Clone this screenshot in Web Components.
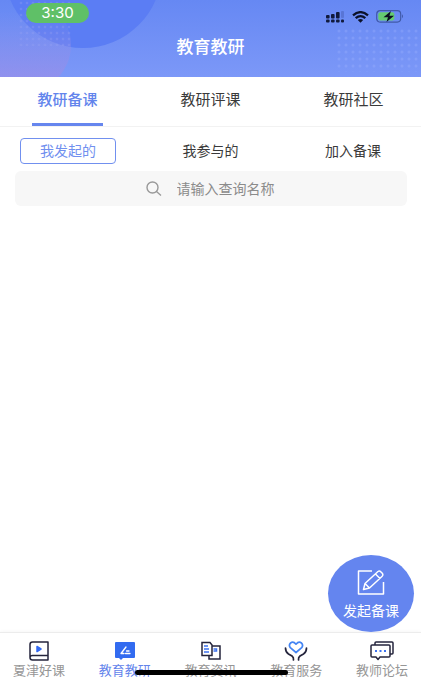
<!DOCTYPE html>
<html lang="zh-CN">
<head>
<meta charset="utf-8">
<meta name="viewport" content="width=device-width, initial-scale=1">
<title>教育教研</title>
<style>
  html, body { margin: 0; height: 100%; background: #fff; }
  body { font-family: "Liberation Sans", "Noto Sans CJK SC", sans-serif; color: #3a3a3a; }
</style>
</head>
<body>
<lesson-app></lesson-app>
<script>
const define = (name, html) => {
  const template = document.createElement('template');
  template.innerHTML = '<style>*{box-sizing:border-box}button{font:inherit;color:inherit;background:none;border:0;padding:0;margin:0;cursor:pointer;white-space:nowrap}svg{display:block}</style>' + html;
  customElements.define(name, class extends HTMLElement {
    constructor() {
      super();
      this.attachShadow({ mode: 'open' }).append(template.content.cloneNode(true));
    }
  });
};

define('status-bar', `
<style>
  :host { display: flex; justify-content: space-between; align-items: flex-start; padding: 3px 17px 0 26px; height: 30px; }
  time { background: #5fc067; color: #fff; border-radius: 10px; width: 63px; height: 20px; line-height: 20px; text-align: center; font-family: Inter, sans-serif; font-size: 15px; }
  .icons { display: flex; align-items: center; gap: 7px; padding-top: 7px; }
</style>
<time>3:30</time>
<div class="icons">
  <svg width="19" height="12" viewBox="0 0 19 12" aria-label="信号"><g fill="#101a3c"><rect x="0" y="4" width="3.600" height="3.500" rx="1"/><rect x="5" y="3" width="3.600" height="4.500" rx="1"/><rect x="10" y="1" width="3.600" height="6.500" rx="1"/><rect x="0" y="8.500" width="3.600" height="3" rx="1"/><rect x="5" y="8.500" width="3.600" height="3" rx="1"/><rect x="10" y="8.500" width="3.600" height="3" rx="1"/><rect x="15" y="8.500" width="3" height="3" rx="1"/></g><rect x="15" y="0" width="3" height="7" rx="1" fill="#4a65be" opacity=".55"/></svg>
  <svg width="17" height="12" viewBox="0 0 17 12" aria-label="无线网络" fill="none" stroke="#0b122b" stroke-width="2.300"><path d="M1 4.300Q8.500-2 16 4.300M3.700 7.200Q8.500 3 13.300 7.200"/><path d="M5.800 9Q8.500 6.800 11.200 9L8.500 11.700Z" fill="#0b122b" stroke="none"/></svg>
  <svg width="28" height="13" viewBox="0 0 28 13" aria-label="电池"><rect x=".7" y=".7" width="24" height="11.400" rx="3.500" fill="none" stroke="#405aa9" stroke-width="1.200"/><rect x="2.300" y="2.300" width="16" height="8.200" rx="2" fill="#65cb70"/><path d="M26 4.300Q28 6.300 26 8.300Z" fill="#405aa9"/><path d="M15 1L7.500 7.200H12L10.500 12 18 5.700H13.400Z" fill="#0b1020"/></svg>
</div>`);

define('page-header', `
<style>
  :host { display: block; position: relative; overflow: hidden; height: 77px; background: linear-gradient(#6688f3, #7c98f8); color: #fff; }
  .art { position: absolute; top: 0; }
  .left { left: 0; } .right { right: 0; }
  status-bar, h1 { position: relative; }
  h1 { margin: 0; padding-top: 5px; text-align: center; font-size: 17px; line-height: 26px; font-weight: 500; }
</style>
<svg class="art left" width="180" height="77" aria-hidden="true">
  <defs>
    <linearGradient id="pink" x1="0" y1="0" x2="0" y2="1"><stop offset=".15" stop-color="#8b8ee8" stop-opacity="0"/><stop offset=".9" stop-color="#988eea" stop-opacity=".8"/></linearGradient>
    <pattern id="dl" width="6" height="6" patternUnits="userSpaceOnUse"><circle cx="3" cy="3" r="1.300" fill="#9aa4f3" opacity=".3"/></pattern>
  </defs>
  <circle cx="83" cy="-31" r="79" fill="#5b7df4"/>
  <circle cx="23" cy="45" r="48" fill="url(#pink)"/>
  <rect x="18" y="0" width="54" height="46" fill="url(#dl)"/>
</svg>
<svg class="art right" width="86" height="77" aria-hidden="true">
  <defs><pattern id="dr" width="7" height="7" patternUnits="userSpaceOnUse"><circle cx="4" cy="3" r="1.500" fill="#a5b7ff" opacity=".28"/></pattern></defs>
  <rect x="0" y="28" width="86" height="44" fill="url(#dr)"/>
</svg>
<status-bar></status-bar>
<h1>教育教研</h1>`);

define('main-tabs', `
<style>
  :host { display: block; border-bottom: 1px solid #f2f2f2; }
  nav { display: flex; justify-content: space-between; padding: 0 32px; }
  button { width: 71px; height: 49px; padding-bottom: 4px; font-size: 15px; border-bottom: 3px solid transparent; display: flex; align-items: center; justify-content: center; }
  .on { color: #6284ec; font-weight: 500; border-color: #6686ee; }
</style>
<nav><button class="on" aria-current="page">教研备课</button><button>教研评课</button><button>教研社区</button></nav>`);

define('sub-tabs', `
<style>
  :host { display: flex; justify-content: space-between; padding: 11px 20px 7px; font-size: 14px; }
  button { width: 96px; height: 26px; padding-bottom: 2px; border: 1px solid transparent; border-radius: 4px; display: flex; align-items: center; justify-content: center; }
  .on { color: #7190ef; border-color: #7190ef; }
</style>
<button class="on" aria-pressed="true">我发起的</button><button>我参与的</button><button>加入备课</button>`);

define('search-box', `
<style>
  :host { display: block; padding: 0 14px 0 15px; }
  label { display: flex; justify-content: center; align-items: center; gap: 15px; height: 35px; border-radius: 6px; background: #f7f7f7; }
  input { width: 100px; border: 0; padding: 0; outline: 0; background: none; font: inherit; font-size: 14px; color: #333; }
  input::placeholder { color: #8b8b8b; opacity: 1; }
</style>
<label><svg width="16" height="16" viewBox="0 0 16 16" fill="none" stroke="#999" stroke-width="1.400" aria-hidden="true"><circle cx="6.500" cy="6.500" r="5.500"/><path d="M10.500 10.500L15 14.500"/></svg><input type="text" placeholder="请输入查询名称" aria-label="请输入查询名称"></label>`);

define('create-button', `
<style>
  :host { display: block; }
  button { width: 86px; height: 77px; border-radius: 50%; background: #6485ef; color: #fff; font-size: 14px; line-height: 20px; display: flex; flex-direction: column; align-items: center; padding-top: 13px; gap: 5px; }
</style>
<button><svg width="28" height="28" viewBox="0 0 28 28" fill="none" stroke="#fff" stroke-width="1.500" stroke-linejoin="round" aria-hidden="true"><path d="M15 3H1.500V26H26.500V14"/><path d="M6.500 21.500L8 15.500 21 3.500Q22.500 2.500 24 4L25.500 5.500Q26.500 7 25.200 8.200L12.500 20ZM18.500 6L23 10.500M8 15.500L12.500 20"/></svg><span>发起备课</span></button>`);

define('nav-item', `
<style>
  :host { display: block; width: 54px; color: #969696; }
  :host([active]) { color: #6384eb; }
  button { width: 100%; display: flex; flex-direction: column; align-items: center; font-size: 13px; line-height: 18px; }
  .icon { height: 21px; }
</style>
<button><span class="icon"><slot name="icon"></slot></span><span><slot></slot></span></button>`);

define('bottom-bar', `
<style>
  :host { display: block; position: relative; border-top: 1px solid #ececec; background: #fff; box-shadow: 0 -1px 3px #00000008; }
  nav { display: flex; justify-content: space-between; padding: 8px 12px 10px; }
  .home { position: absolute; left: 50%; bottom: 15px; width: 153px; height: 5px; margin-left: -76px; border-radius: 3px; background: #000; }
</style>
<nav>
  <nav-item><svg slot="icon" width="20" height="20" viewBox="0 0 20 20" fill="none" stroke="#24243c" stroke-width="1.500" stroke-linejoin="round"><path d="M3.500 1H19V19H3.500Q1 19 1 16.500V3.500Q1 1 3.500 1ZM1 16.500Q1 14.500 3.500 14.500H19"/><path d="M8 5.500L12 8 8 10.500Z" fill="#3269f3" stroke="#3269f3"/></svg>夏津好课</nav-item>
  <nav-item active><svg slot="icon" width="20" height="20" viewBox="0 0 20 20"><path d="M1 1H19Q20 1 20 2V16Q20 17 19 17H8L6 19 4 17H1Q0 17 0 16V2Q0 1 1 1Z" fill="#326bf0"/><path d="M6 12.500L11 6M6 12.500H9M11.500 10H14M10.500 12.500H15" fill="none" stroke="#fff" stroke-width="1.300" stroke-linecap="round"/></svg>教育教研</nav-item>
  <nav-item><svg slot="icon" width="20" height="20" viewBox="0 0 20 20" fill="none" stroke="#24243c" stroke-width="1.500"><path d="M10 5H19V18H8V14"/><path d="M1 1.500H9L11 4V14.500H1Z" fill="#fff"/><path d="M3 5H7M3 8H8M3 11H8M12.500 8H15.500V10H12.500" stroke="#3d72ef"/></svg>教育资讯</nav-item>
  <nav-item><svg slot="icon" width="24" height="20" viewBox="0 0 24 20" fill="none" stroke-width="1.700" stroke-linecap="round"><path d="M12 11.500L6.300 6.700Q4.400 4 6.600 2 9.200 0 12 3.200 14.800 0 17.400 2 19.600 4 17.700 6.700Z" stroke="#4384f4" stroke-linejoin="round"/><path d="M1.500 7Q1.500 11 4.500 13L8 15Q9.800 16.300 9.500 19M22.500 7Q22.500 11 19.500 13L16 15Q14.200 16.300 14.500 19" stroke="#24243c"/></svg>教育服务</nav-item>
  <nav-item><svg slot="icon" width="24" height="20" viewBox="0 0 24 20" fill="none" stroke="#24243c" stroke-width="1.500" stroke-linejoin="round"><path d="M5 4V2Q5 1 6 1H22Q23 1 23 2V12Q23 13 22 13H20"/><path d="M2 4H19Q20 4 20 5V15Q20 16 19 16H10L8 18.500 6 16H2Q1 16 1 15V5Q1 4 2 4Z" fill="#fff"/><path d="M5 10H7M9.500 10H11.500M14 10H16" stroke="#3d72ef" stroke-width="2"/></svg>教师论坛</nav-item>
</nav>
<div class="home"></div>`);

define('lesson-app', `
<style>
  :host { display: flex; flex-direction: column; min-height: 100vh; background: #fff; }
  main { flex: 1; }
  footer { position: relative; }
  create-button { position: absolute; right: 7px; bottom: 100%; }
</style>
<page-header></page-header>
<main-tabs></main-tabs>
<sub-tabs></sub-tabs>
<search-box></search-box>
<main></main>
<footer><bottom-bar></bottom-bar><create-button></create-button></footer>`);
</script>
</body>
</html>
